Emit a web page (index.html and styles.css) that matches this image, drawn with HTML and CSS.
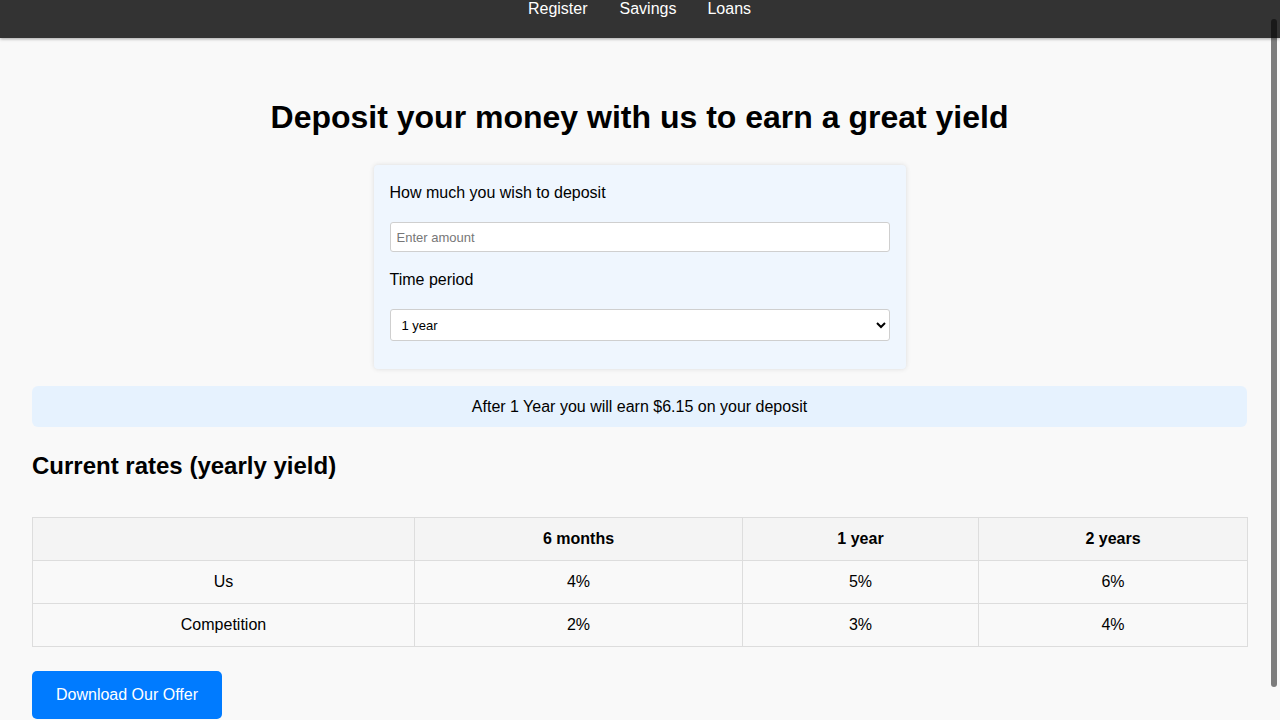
FILE: index.html
```html
<!DOCTYPE html>
<html lang="en">
<head>
<meta charset="utf-8">
<title>Deposit</title>
<link rel="stylesheet" href="styles.css">
</head>
<body>
<nav class="topnav">
  <a class="navlink" href="#">Register</a>
  <a class="navlink" href="#">Savings</a>
  <a class="navlink" href="#">Loans</a>
</nav>
<main class="page">
  <h1 class="title">Deposit your money with us to earn a great yield</h1>
  <form class="card">
    <label class="label" for="amount">How much you wish to deposit</label>
    <input class="field" id="amount" type="text" placeholder="Enter amount">
    <label class="label" for="period">Time period</label>
    <select class="field select" id="period">
      <option>6 months</option>
      <option selected>1 year</option>
      <option>2 years</option>
    </select>
  </form>
  <div class="result">After 1 Year you will earn $6.15 on your deposit</div>
  <h2 class="subtitle">Current rates (yearly yield)</h2>
  <table class="rates">
    <colgroup>
      <col class="c1"><col class="c2"><col class="c3"><col class="c4">
    </colgroup>
    <thead>
      <tr><th></th><th>6 months</th><th>1 year</th><th>2 years</th></tr>
    </thead>
    <tbody>
      <tr><td>Us</td><td>4%</td><td>5%</td><td>6%</td></tr>
      <tr><td>Competition</td><td>2%</td><td>3%</td><td>4%</td></tr>
    </tbody>
  </table>
  <button class="btn" type="button">Download Our Offer</button>
</main>
<div class="scrollthumb"></div>
</body>
</html>
```
FILE: styles.css
```css
html, body {
  margin: 0;
  padding: 0;
  height: 720px;
  overflow: hidden;
}
body {
  background: #f9f9f9;
  font-family: "Liberation Sans", Arial, sans-serif;
  color: #000;
  font-size: 16px;
}
.topnav {
  height: 38px;
  background: #333;
  display: flex;
  justify-content: center;
  align-items: flex-start;
  gap: 29px;
  box-shadow: 0 1px 3px rgba(0,0,0,0.35);
  position: relative;
  z-index: 2;
}
.navlink {
  color: #fff;
  text-decoration: none;
  font-size: 16px;
  line-height: 18px;
}
.navlink:first-child { margin-right: 2px; transform: translateX(-1px); }
.navlink:nth-child(2) { margin-right: 2px; }
.page {
  padding: 0 33px 0 32px;
}
.title {
  font-size: 32px;
  font-weight: bold;
  line-height: 37px;
  text-align: center;
  margin: 61px 0 29px;
}
.card {
  width: 500px;
  margin: 0 auto;
  padding: 16px 16px 28px;
  background: #eff6fe;
  border-radius: 4px;
  box-shadow: 0 0 5px rgba(0,0,0,0.12);
}
.label {
  display: block;
  font-size: 16px;
  line-height: 18px;
  margin: 3px 0 20px;
}
.field {
  display: block;
  box-sizing: border-box;
  width: 100%;
  height: 30px;
  border: 1px solid #cfcfcf;
  border-radius: 3px;
  background: #fff;
  font-family: "Liberation Sans", Arial, sans-serif;
  font-size: 13px;
  padding: 0 6px;
  margin: 0 0 19px;
}
.field::placeholder { color: #777; }
.select {
  height: 32px;
  padding: 0 7px;
  margin: 0;
  color: #000;
}
.result {
  margin-top: 17px;
  background: #e6f2fe;
  border-radius: 6px;
  text-align: center;
  font-size: 16px;
  line-height: 18px;
  padding: 12px 0 11px;
}
.subtitle {
  font-size: 24px;
  line-height: 28px;
  font-weight: bold;
  margin: 25px 0 37px;
}
.rates {
  width: 100%;
  border-collapse: collapse;
  table-layout: fixed;
  border: 1px solid #ddd;
}
.c1 { width: 382px; }
.c2 { width: 328px; }
.c3 { width: 236px; }
.c4 { width: 269px; }
.rates th, .rates td {
  border: 1px solid #ddd;
  padding: 12px;
  line-height: 18px;
  text-align: center;
  font-size: 16px;
}
.rates th {
  background: #f4f4f4;
  font-weight: bold;
}
.btn {
  display: block;
  margin-top: 24px;
  background: #007bff;
  color: #fff;
  border: none;
  border-radius: 5px;
  font-family: "Liberation Sans", Arial, sans-serif;
  font-size: 16px;
  line-height: 18px;
  padding: 15px 24px;
}
.scrollthumb {
  position: fixed;
  right: 3px;
  top: 19px;
  width: 6px;
  height: 668px;
  border-radius: 3px;
  background: rgba(0,0,0,0.5);
  z-index: 5;
}
```
